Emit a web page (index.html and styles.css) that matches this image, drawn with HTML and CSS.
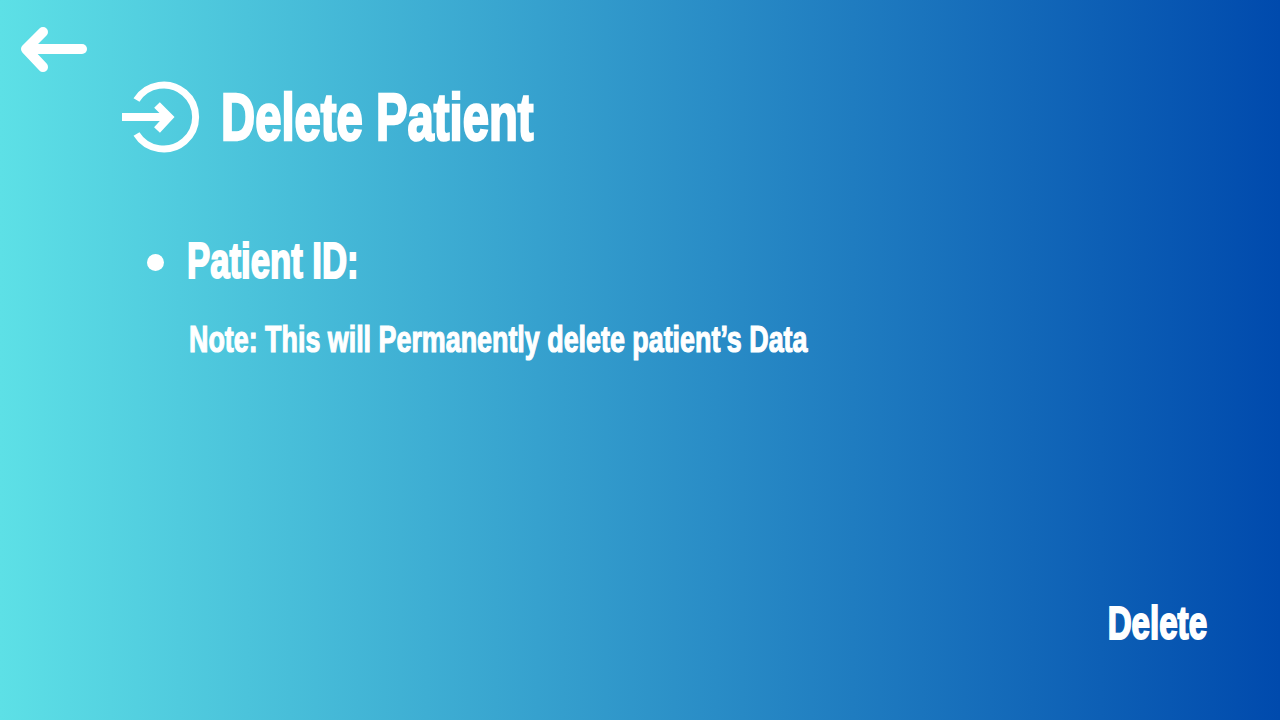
FILE: index.html
```html
<!DOCTYPE html>
<html lang="en">

<head>
    <meta charset="UTF-8">
    <meta name="viewport" content="width=device-width, initial-scale=1.0">
    <title>Delete Patient</title>
    <link rel="stylesheet" href="styles.css">
</head>

<body>
    <div class="page">
        <a class="back" href="#" aria-label="Back">
            <svg width="68" height="48" viewBox="0 0 68 48" fill="none" stroke="#fff" stroke-width="10" stroke-linecap="round" stroke-linejoin="round">
                <path d="M62 24H7"></path>
                <path d="M23 7L6 24L23 42"></path>
            </svg>
        </a>

        <div class="title-row">
            <svg class="title-icon" width="80" height="72" viewBox="0 0 80 72" fill="none" stroke="#fff" stroke-width="7">
                <path d="M15.5 19A32 32 0 1 1 15.5 53"></path>
                <path d="M1 36H48" stroke-width="8"></path>
                <path d="M36 24L48 36L36 49" stroke-width="8"></path>
            </svg>
            <h1 class="title"><span class="narrow">Delete Patient</span></h1>
        </div>

        <ul class="fields">
            <li class="field"><span class="narrow field-text">Patient ID:</span></li>
        </ul>
        <p class="note"><span class="narrow note-text">Note: This will Permanently delete patient’s Data</span></p>

        <div class="actions">
            <button class="delete-btn"><span class="narrow delete-text">Delete</span></button>
        </div>
    </div>
</body>

</html>
```

FILE: styles.css
```css
* {
    box-sizing: border-box;
}

body {
    font-family: "Liberation Sans", Arial, sans-serif;
    background: linear-gradient(90deg, #5de0e6, #004aad);
    color: #fff;
    margin: 0;
    height: 720px;
    overflow: hidden;
}

.page {
    display: flex;
    flex-direction: column;
    height: 720px;
    padding: 25px 73px 0 20px;
}

.back {
    display: block;
    width: 68px;
    height: 48px;
}

.back svg,
.title-icon {
    display: block;
}

/* no condensed face is installed, so the text gets squeezed */
.narrow {
    display: inline-block;
    white-space: nowrap;
    transform-origin: left center;
    transform: scaleX(0.716);
}

.title-row {
    display: flex;
    align-items: center;
    gap: 20px;
    margin: 8px 0 0 101px;
}

.title {
    margin: 0;
    font-size: 66px;
    line-height: 72px;
    font-weight: 700;
    -webkit-text-stroke: 2.5px #fff;
}

.fields {
    list-style: none;
    margin: 77px 0 0 127px;
    padding: 0;
}

.field {
    display: flex;
    align-items: center;
    gap: 23px;
    font-size: 50px;
    line-height: 62px;
    font-weight: 700;
    -webkit-text-stroke: 2px #fff;
}

.field::before {
    content: "";
    width: 17px;
    height: 17px;
    margin-top: 2px;
    border-radius: 50%;
    background: #fff;
}

.field-text {
    transform: scaleX(0.694);
}

.note {
    margin: 26px 0 0 169px;
    font-size: 37px;
    line-height: 44px;
    font-weight: 700;
    -webkit-text-stroke: 1.2px #fff;
}

.note-text {
    transform: scaleX(0.726);
}

.actions {
    display: flex;
    justify-content: flex-end;
    margin-top: auto;
    padding-bottom: 70px;
}

.delete-btn {
    border: 0;
    padding: 0;
    background: none;
    color: #fff;
    font-family: inherit;
    font-size: 46px;
    line-height: 54px;
    font-weight: 700;
    -webkit-text-stroke: 2px #fff;
}

.delete-text {
    transform-origin: right center;
    transform: scaleX(0.72);
}
```
